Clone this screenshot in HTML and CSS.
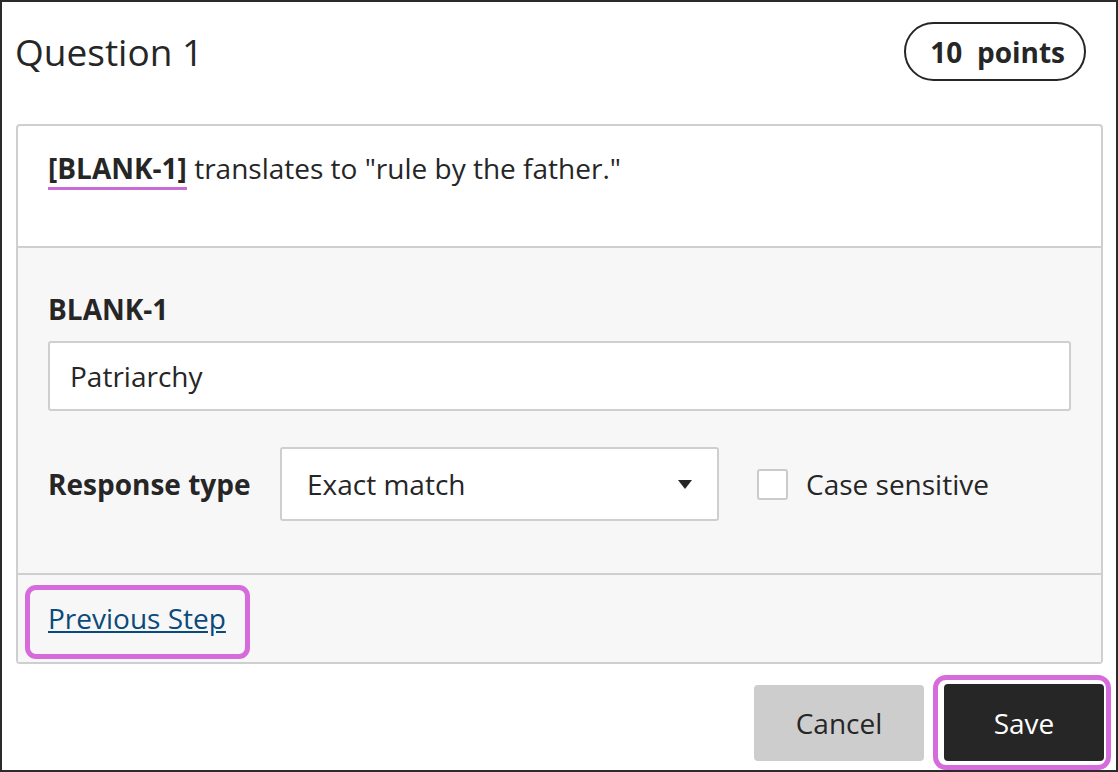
FILE: index.html
```html
<!DOCTYPE html>
<html>
<head>
    <title>Question 1</title>
    <link rel="stylesheet" href="styles.css">
</head>
<body>
<div class="dialog">
    <header class="dialog-header">
        <h1>Question 1</h1>
        <span class="points">10&nbsp;&nbsp;points</span>
    </header>

    <div class="card">
        <div class="question-text">
            <span class="blank-tag">[BLANK-1]</span> translates to "rule by the father."
        </div>

        <div class="blank-settings">
            <div class="field-label">BLANK-1</div>
            <div class="text-input">Patriarchy</div>

            <div class="response-row">
                <div class="response-label">Response type</div>
                <div class="select-box">
                    <span>Exact match</span>
                    <svg width="14" height="9" viewBox="0 0 14 9"><path d="M0 0 H14 L7 9 Z" fill="#262626"/></svg>
                </div>
                <span class="checkbox"></span>
                <span class="checkbox-label">Case sensitive</span>
            </div>
        </div>

        <div class="card-footer">
            <a href="#" class="prev-link">Previous Step</a>
        </div>
    </div>

    <div class="actions">
        <button class="button cancel-button">Cancel</button>
        <span class="focus-ring">
            <button class="button save-button">Save</button>
        </span>
    </div>
</div>
</body>
</html>
```

FILE: styles.css
```css
body {
	margin: 0;
	font-family: "Open Sans", "Noto Sans", sans-serif;
	color: #262626;
	background-color: #FFFFFF;
}

.dialog {
	width: 1118px;
	height: 772px;
	box-sizing: border-box;
	border: 2px solid #2b2b2b;
	display: flex;
	flex-direction: column;
}

.dialog-header {
	display: flex;
	justify-content: space-between;
	align-items: center;
	padding: 20px 30px 0 13px;
	margin-bottom: 43px;
}

.dialog-header h1 {
	margin: 0;
	font-size: 37px;
	font-weight: normal;
}

.points {
	display: flex;
	align-items: center;
	height: 59px;
	box-sizing: border-box;
	padding: 0 19px 0 24px;
	border: 2px solid #262626;
	border-radius: 30px;
	font-size: 28px;
	font-weight: bold;
}

.card {
	margin: 0 13px 0 14px;
	border: 2px solid #cfcfcf;
	border-radius: 4px;
}

.question-text {
	padding: 23px 30px 59px;
	font-size: 28px;
	line-height: 38px;
	border-bottom: 2px solid #cfcfcf;
}

.blank-tag {
	font-weight: bold;
	border-bottom: 3px solid #c86dd7;
}

.blank-settings {
	background-color: #f7f7f7;
	padding: 42px 30px 52px;
	border-bottom: 2px solid #cfcfcf;
}

.field-label {
	font-size: 28px;
	line-height: 38px;
	font-weight: bold;
}

.text-input {
	margin-top: 13px;
	height: 70px;
	box-sizing: border-box;
	display: flex;
	align-items: center;
	padding-left: 20px;
	background-color: #FFFFFF;
	border: 2px solid #cfcfcf;
	border-radius: 3px;
	font-size: 28px;
}

.response-row {
	display: flex;
	align-items: center;
	margin-top: 36px;
	font-size: 28px;
}

.response-label {
	flex: 0 0 232px;
	font-weight: bold;
}

.select-box {
	width: 439px;
	height: 74px;
	box-sizing: border-box;
	display: flex;
	justify-content: space-between;
	align-items: center;
	padding: 0 25px 0 25px;
	background-color: #FFFFFF;
	border: 2px solid #cfcfcf;
	border-radius: 3px;
}

.checkbox {
	width: 31px;
	height: 31px;
	box-sizing: border-box;
	margin-left: 38px;
	background-color: #FFFFFF;
	border: 2px solid #cbcbcb;
	border-radius: 3px;
}

.checkbox-label {
	margin-left: 18px;
}

.card-footer {
	background-color: #f7f7f7;
	padding: 10px 0 3px 7px;
}

.prev-link {
	display: inline-block;
	padding: 9px 19px 17px 18px;
	border: 5px solid #d66bdb;
	border-radius: 11px;
	color: #0a4a7c;
	font-size: 28px;
	line-height: 38px;
}

.actions {
	display: flex;
	justify-content: flex-end;
	align-items: center;
	margin-top: 11px;
	padding-right: 5px;
}

.button {
	font-family: "Open Sans", "Noto Sans", sans-serif;
	font-size: 28px;
	border: none;
	border-radius: 4px;
	cursor: pointer;
}

.cancel-button {
	width: 170px;
	height: 76px;
	margin-right: 9px;
	background-color: #cdcdcd;
	color: #262626;
}

.focus-ring {
	display: flex;
	padding: 4px 2px 4px 6px;
	border: 5px solid #d66bdb;
	border-radius: 13px;
}

.save-button {
	width: 160px;
	height: 77px;
	background-color: #262626;
	color: #FFFFFF;
}
```
